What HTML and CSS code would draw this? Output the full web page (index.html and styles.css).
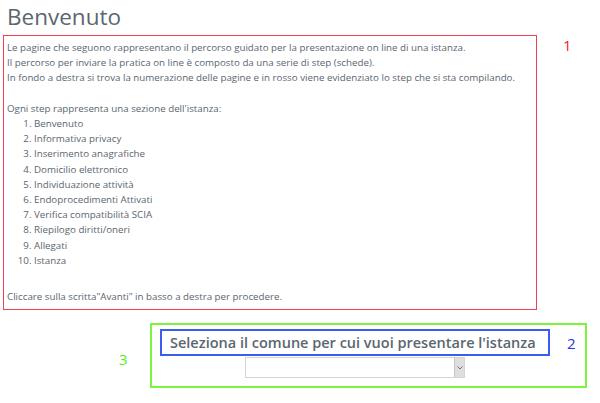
FILE: index.html
```html
<!DOCTYPE html>
<html lang="it">
<head>
<meta charset="utf-8">
<link rel="stylesheet" href="styles.css">
</head>
<body>
<div class="page">
  <h1 class="title">Benvenuto</h1>
  <div class="row-intro">
    <div class="box-red">
      <p class="txt">Le pagine che seguono rappresentano il percorso guidato per la presentazione on line di una istanza.<br>Il percorso per inviare la pratica on line è composto da una serie di step (schede).<br>In fondo a destra si trova la numerazione delle pagine e in rosso viene evidenziato lo step che si sta compilando.<br><br>Ogni step rappresenta una sezione dell'istanza:</p>
      <ol class="steps">
        <li>Benvenuto</li>
        <li>Informativa privacy</li>
        <li>Inserimento anagrafiche</li>
        <li>Domicilio elettronico</li>
        <li>Individuazione attività</li>
        <li>Endoprocedimenti Attivati</li>
        <li>Verifica compatibilità SCIA</li>
        <li>Riepilogo diritti/oneri</li>
        <li>Allegati</li>
        <li>Istanza</li>
      </ol>
      <p class="txt last">Cliccare sulla scritta"Avanti" in basso a destra per procedere.</p>
    </div>
    <span class="num num-red">1</span>
  </div>
  <div class="row-select">
    <span class="num num-green">3</span>
    <div class="box-green">
      <div class="head-row">
        <h2 class="box-blue">Seleziona il comune per cui vuoi presentare l'istanza</h2>
        <span class="num num-blue">2</span>
      </div>
      <div class="sel-wrap">
        <div class="sel-box">
          <select class="sel"><option></option></select>
          <span class="sel-arrow"><svg width="6" height="4" viewBox="0 0 6 4"><path d="M0.5 0.5 L3 3 L5.5 0.5" fill="none" stroke="#777" stroke-width="1"/></svg></span>
        </div>
      </div>
    </div>
  </div>
</div>
</body>
</html>
```
FILE: styles.css
```css
html, body { margin: 0; padding: 0; background: #fff; }
body { font-family: "Open Sans", "DejaVu Sans", sans-serif; color: #5b6670; }
.page { width: 600px; height: 403px; padding: 0 0 0 3px; box-sizing: border-box; }
.title { margin: 0; padding: 2px 0 0 4px; font-size: 22.5px; font-weight: 400; line-height: 30px; height: 31px; color: #5b6670; }
.row-intro { display: flex; align-items: flex-start; margin-top: 2px; }
.box-red { width: 534px; height: 275px; box-sizing: border-box; border: 1px solid #f0404f; padding: 4px 0 0 3px; }
.txt { margin: 0; font-size: 9.75px; line-height: 15.2px; }
.txt.last { margin-top: 21px; }
.steps { margin: 0; padding-left: 27px; font-size: 9.75px; line-height: 15.2px; }
.num { font-size: 15px; line-height: 18px; font-family: "Open Sans", sans-serif; }
.num-red { color: #f01c24; margin: 1px 0 0 26px; }
.row-select { display: flex; align-items: flex-start; margin-top: 13px; }
.num-green { color: #52ee22; margin: 27px 0 0 116px; width: 31px; }
.box-green { width: 437px; height: 65px; box-sizing: border-box; border: 2px solid #7cf542; padding: 4px 0 0 8px; }
.head-row { display: flex; align-items: flex-start; }
.box-blue { margin: 0; width: 390px; height: 27px; box-sizing: border-box; border: 2px solid #3c5cf0; font-size: 14.5px; font-weight: 600; line-height: 23px; padding-left: 8px; color: #5b6670; white-space: nowrap; }
.num-blue { color: #2236ee; margin: 5px 0 0 17px; }
.sel-wrap { padding: 1px 0 0 85px; }
.sel-box { position: relative; width: 220px; height: 21px; }
.sel { display: block; width: 220px; height: 21px; border: 1px solid #d4d4d4; background: #fff; border-radius: 0; appearance: none; -webkit-appearance: none; font-family: "Open Sans", sans-serif; font-size: 10px; margin: 0; }
.sel-arrow { position: absolute; top: 1px; right: 1px; width: 9px; height: 19px; background: #dedede; border-left: 1px solid #c6c6c6; display: flex; align-items: center; justify-content: center; }
```
